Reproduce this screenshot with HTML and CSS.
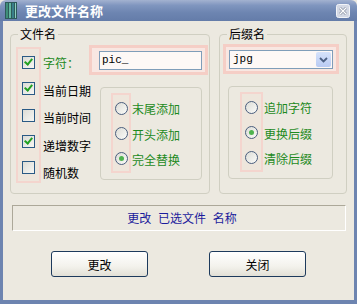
FILE: index.html
```html
<!DOCTYPE html>
<html lang="zh-CN">
<head>
  <meta charset="UTF-8" />
  <title>更改文件名称</title>
  <link rel="stylesheet" href="styles.css">
</head>
<body>
  <div class="window">
    <div class="titlebar">
      <svg class="app-icon" width="12" height="17" viewBox="0 0 12 17">
        <rect x="0" y="0" width="12" height="17" fill="#2d5a5a" />
        <rect x="1" y="1" width="2" height="15" fill="#3f8f7a" />
        <rect x="4" y="1" width="2" height="15" fill="#62b8a0" />
        <rect x="7" y="1" width="2" height="15" fill="#3a7f8a" />
        <rect x="10" y="1" width="1" height="15" fill="#8fd0c0" />
      </svg>
      <span class="title">更改文件名称</span>
      <span class="close">
        <svg width="14" height="14" viewBox="0 0 14 14">
          <rect x="0.5" y="0.5" width="13" height="13" rx="2" fill="#d3d8e4" stroke="#f2f4f8" />
          <path d="M4 4 L10 10 M10 4 L4 10" stroke="#8a92a3" stroke-width="2.6" />
          <path d="M4 4 L10 10 M10 4 L4 10" stroke="#ffffff" stroke-width="1.2" />
        </svg>
      </span>
    </div>

    <div class="client">
      <div class="groups">
        <div class="group group-name">
          <span class="group-title">文件名</span>
          <div class="check-col mark">
            <span class="row"><span class="check on"></span></span>
            <span class="row"><span class="check on"></span></span>
            <span class="row"><span class="check"></span></span>
            <span class="row"><span class="check on"></span></span>
            <span class="row"><span class="check"></span></span>
          </div>
          <div class="label-col">
            <span class="row green">字符：</span>
            <span class="row">当前日期</span>
            <span class="row">当前时间</span>
            <span class="row">递增数字</span>
            <span class="row">随机数</span>
          </div>
          <div class="name-side">
            <div class="field-mark">
              <div class="textbox">pic_</div>
            </div>
            <div class="subgroup sub-name">
              <div class="radio-col mark">
                <span class="rrow"><span class="radio"></span></span>
                <span class="rrow"><span class="radio"></span></span>
                <span class="rrow"><span class="radio on"></span></span>
              </div>
              <div class="rlabel-col">
                <span class="rrow green">末尾添加</span>
                <span class="rrow green">开头添加</span>
                <span class="rrow green">完全替换</span>
              </div>
            </div>
          </div>
        </div>

        <div class="group group-suffix">
          <span class="group-title">后缀名</span>
          <div class="field-mark select-mark">
            <div class="selectbox">
              <span class="select-value">jpg</span>
              <span class="select-arrow">
                <svg width="9" height="6" viewBox="0 0 9 6">
                  <path d="M1 1 L4.5 4.5 L8 1" fill="none" stroke="#4d6185" stroke-width="1.8" />
                </svg>
              </span>
            </div>
          </div>
          <div class="subgroup sub-suffix">
            <div class="radio-col mark">
              <span class="rrow"><span class="radio"></span></span>
              <span class="rrow"><span class="radio on"></span></span>
              <span class="rrow"><span class="radio"></span></span>
            </div>
            <div class="rlabel-col">
              <span class="rrow green">追加字符</span>
              <span class="rrow green">更换后缀</span>
              <span class="rrow green">清除后缀</span>
            </div>
          </div>
        </div>
      </div>

      <div class="status">更改 已选文件 名称</div>

      <div class="actions">
        <button class="btn">更改</button>
        <button class="btn">关闭</button>
      </div>
    </div>
  </div>
</body>
</html>
```

FILE: styles.css
```css
body {
  margin: 0;
  font-family: "Noto Sans CJK SC", "Liberation Sans", sans-serif;
  font-size: 12px;
  background: #ece9e0;
}

.window {
  width: 357px;
  height: 304px;
  display: flex;
  flex-direction: column;
  background: #ece9e0;
}

.titlebar {
  height: 21px;
  display: flex;
  align-items: center;
  padding: 0 5px 0 5px;
  border-radius: 6px 6px 0 0;
  background: linear-gradient(#a3b2d0 0%, #8096bf 25%, #6d85b1 60%, #647ca9 100%);
}

.app-icon {
  display: block;
}

.title {
  margin-left: 8px;
  color: #fff;
  font-size: 13px;
  font-weight: bold;
  line-height: 21px;
}

.close {
  margin-left: auto;
  margin-right: 2px;
  display: flex;
}

.client {
  flex: 1;
  border-left: 3px solid #6d84b0;
  border-right: 3px solid #6d84b0;
  border-bottom: 4px solid #6d84b0;
}

.groups {
  display: flex;
  gap: 9px;
  margin: 13px 0 0 7px;
}

.group {
  position: relative;
  display: flex;
  border: 1px solid #d0cfc2;
  border-radius: 4px;
  height: 158px;
}

.group-title {
  position: absolute;
  top: -9px;
  left: 7px;
  padding: 0 2px;
  background: #ece9e0;
  font-size: 12px;
  line-height: 16px;
  color: #000;
}

.group-name {
  width: 198px;
}

.group-suffix {
  width: 126px;
  flex-direction: column;
}

.mark {
  border: 2px solid #f4d5ce;
  background: rgba(250, 215, 205, 0.18);
}

.check-col {
  display: flex;
  flex-direction: column;
  width: 17px;
  height: 132px;
  margin: 12px 0 0 5px;
  padding-left: 4px;
  box-sizing: content-box;
}

.row {
  height: 27.5px;
  display: flex;
  align-items: center;
  white-space: nowrap;
}

.label-col {
  display: flex;
  flex-direction: column;
  width: 46px;
  margin: 14px 0 0 2px;
  color: #000;
}

.green {
  color: #1d8a1d;
}

.check {
  width: 11px;
  height: 11px;
  border: 1px solid #2a5a85;
  background: linear-gradient(135deg, #dcdcd6, #f6f6f3);
  position: relative;
}

.check.on::after {
  content: "";
  position: absolute;
  left: 3px;
  top: 0px;
  width: 3px;
  height: 6px;
  border: solid #22a122;
  border-width: 0 2px 2px 0;
  transform: rotate(40deg);
}

.name-side {
  display: flex;
  flex-direction: column;
  margin-top: 10px;
}

.field-mark {
  border: 3px solid #f5cec6;
  background: #f8e7e2;
  padding: 3px 3px 2px 7px;
  width: 119px;
  height: 30px;
  box-sizing: border-box;
}

.textbox {
  height: 19px;
  border: 1px solid #7f9db9;
  background: #fdf8f6;
  box-sizing: border-box;
  font-family: "Liberation Mono", monospace;
  font-size: 11px;
  line-height: 17px;
  padding-left: 2px;
}

.subgroup {
  display: flex;
  border: 1px solid #d0cfc2;
  border-radius: 4px;
  height: 93px;
  box-sizing: border-box;
}

.sub-name {
  width: 102px;
  margin: 12px 0 0 11px;
}

.radio-col {
  display: flex;
  flex-direction: column;
  height: 80px;
  box-sizing: border-box;
  padding-top: 1px;
  margin-top: 5px;
}

.sub-name .radio-col {
  width: 20px;
  margin-left: 10px;
  padding-left: 2px;
}

.rrow {
  height: 25.5px;
  display: flex;
  align-items: center;
  white-space: nowrap;
}

.rlabel-col {
  display: flex;
  flex-direction: column;
  margin: 8px 0 0 1px;
}

.radio {
  width: 11px;
  height: 11px;
  border: 1px solid #4a5e7e;
  border-radius: 50%;
  background: linear-gradient(135deg, #dcdcd6, #fbfbf9);
  position: relative;
}

.radio.on::after {
  content: "";
  position: absolute;
  left: 3px;
  top: 3px;
  width: 5px;
  height: 5px;
  border-radius: 50%;
  background: #4fb34f;
}

.select-mark {
  width: 116px;
  margin: 9px 0 0 3px;
  padding: 3px 3px 2px 3px;
}

.selectbox {
  display: flex;
  height: 19px;
  border: 1px solid #7f9db9;
  background: #fdf8f6;
  box-sizing: border-box;
}

.select-value {
  flex: 1;
  font-family: "Liberation Mono", monospace;
  font-size: 11px;
  line-height: 17px;
  padding-left: 3px;
}

.select-arrow {
  width: 15px;
  margin: 1px;
  border-radius: 2px;
  background: linear-gradient(#d6e2fb, #b9cbf3);
  display: flex;
  align-items: center;
  justify-content: center;
}

.sub-suffix {
  width: 105px;
  margin: 12px 0 0 8px;
}

.sub-suffix .radio-col {
  width: 23px;
  margin-left: 11px;
  padding-left: 3px;
}

.sub-suffix .rlabel-col {
  margin-left: 1px;
}

.status {
  width: 334px;
  height: 26px;
  box-sizing: border-box;
  margin: 11px 0 0 9px;
  border: 1px solid #fff;
  border-top-color: #aca899;
  border-left-color: #aca899;
  color: #1c1c9c;
  text-align: center;
  line-height: 24px;
  padding-left: 6px;
  word-spacing: 4px;
}

.actions {
  display: flex;
  gap: 61px;
  margin: 20px 0 0 48px;
}

.btn {
  width: 97px;
  height: 26px;
  border: 1px solid #1d3a5c;
  border-radius: 3px;
  background: linear-gradient(#ffffff, #f3f2ec 60%, #e2e0d6);
  font-family: "Noto Sans CJK SC", sans-serif;
  font-size: 12px;
  color: #000;
  padding: 0;
}
```
